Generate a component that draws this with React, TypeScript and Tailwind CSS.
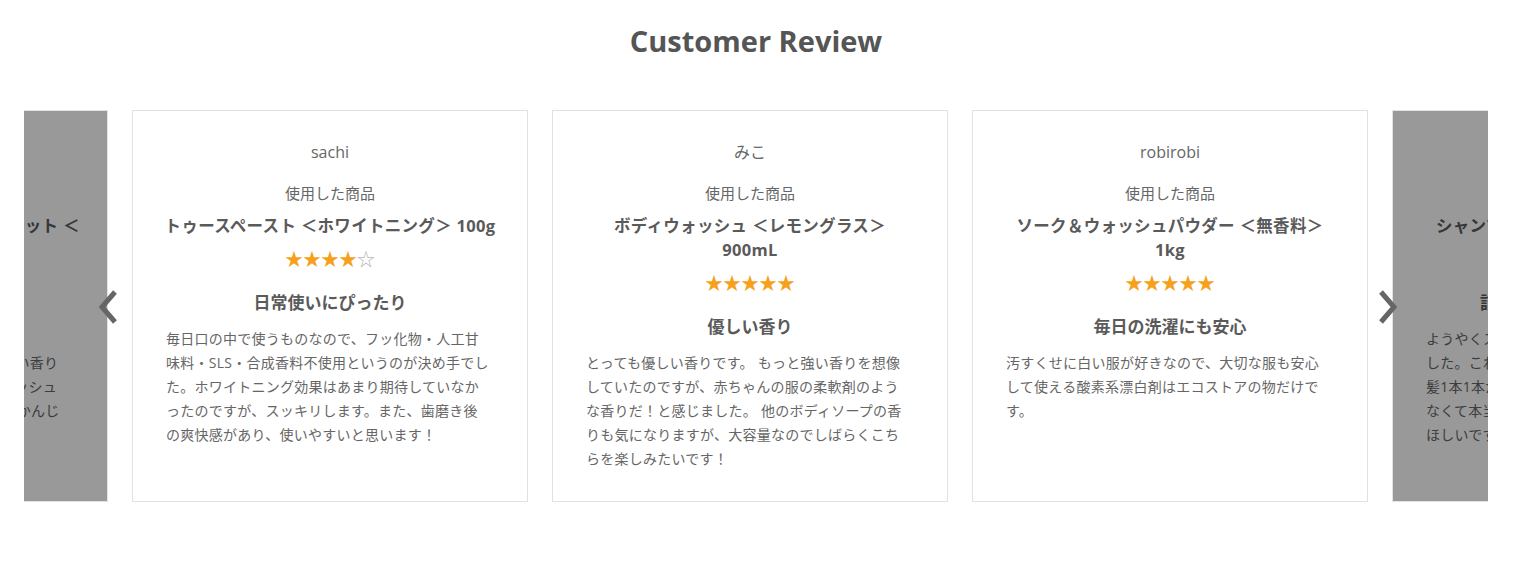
import React from "react";

type Review = {
    name: string;
    product: string[];
    rating: number;
    title: string;
    body: string;
    dimmed?: boolean;
};

const reviews: Review[] = [
    {
        name: "ゆうこ",
        product: ["ナチュラルハンドソープ詰め替え用セット ＜", "ローズ＞ 500mL"],
        rating: 5,
        title: "香りに癒やされます",
        body: "ローズの香りが上品で、ほんのり甘く優しい香りです。泡立ちも良くて、毎日のハンドウォッシュが楽しみになりました。使うたびに幸せなかんじです。",
        dimmed: true,
    },
    {
        name: "sachi",
        product: ["トゥースペースト ＜ホワイトニング＞ 100g"],
        rating: 4,
        title: "日常使いにぴったり",
        body: "毎日口の中で使うものなので、フッ化物・人工甘味料・SLS・合成香料不使用というのが決め手でした。ホワイトニング効果はあまり期待していなかったのですが、スッキリします。また、歯磨き後の爽快感があり、使いやすいと思います！",
    },
    {
        name: "みこ",
        product: ["ボディウォッシュ ＜レモングラス＞", "900mL"],
        rating: 5,
        title: "優しい香り",
        body: "とっても優しい香りです。 もっと強い香りを想像していたのですが、赤ちゃんの服の柔軟剤のような香りだ！と感じました。 他のボディソープの香りも気になりますが、大容量なのでしばらくこちらを楽しみたいです！",
    },
    {
        name: "robirobi",
        product: ["ソーク＆ウォッシュパウダー ＜無香料＞", "1kg"],
        rating: 5,
        title: "毎日の洗濯にも安心",
        body: "汚すくせに白い服が好きなので、大切な服も安心して使える酸素系漂白剤はエコストアの物だけです。",
    },
    {
        name: "まりりん",
        product: ["シャンプー ＜ダメージリペア＞ 1000mL"],
        rating: 5,
        title: "詰め替えもできて嬉しいです",
        body: "ようやくスカルプにも合うシャンプーに出会えました。これを使ってからは、くせが強かった私の髪1本1本がしっとりとまとまって、ひっかかりもなくて本当に満足しています。これからも作ってほしいです！",
        dimmed: true,
    },
];

function Stars({ rating }: { rating: number }) {
    return (
        <div className="text-[18px] leading-[24px] font-['Noto_Sans_CJK_JP',sans-serif]">
            {[1, 2, 3, 4, 5].map((i) =>
                i <= rating ? (
                    <span key={i} className="text-[#f5a11c]">★</span>
                ) : (
                    <span key={i} className="text-[#b5b5b5]">☆</span>
                )
            )}
        </div>
    );
}

function ReviewCard({ review }: { review: Review }) {
    return (
        <div className="relative h-[392px] w-[396px] shrink-0 border border-[#e2e2e2] bg-white pt-[29px] text-center">
            <p className="text-[16px] leading-[24px] text-[#666]">{review.name}</p>
            <p className="mt-[17px] text-[15px] leading-[24px] text-[#666]">使用した商品</p>
            <p className="mt-[9px] px-[20px] text-[16.5px] font-bold leading-[24px] tracking-[0.3px] text-[#5a5a5a]">
                {review.product.map((line) => (
                    <span key={line} className="block">
                        {line}
                    </span>
                ))}
            </p>
            <div className="mt-[8px]">
                <Stars rating={review.rating} />
            </div>
            <h3 className="mt-[20px] text-[17px] font-bold leading-[26px] text-[#5a5a5a]">{review.title}</h3>
            <p className="mt-[11px] ml-[33px] w-[324px] text-left text-[14px] leading-[24px] tracking-[0.25px] text-[#666]">
                {review.body}
            </p>
            {review.dimmed && <div className="absolute inset-0 bg-black/40" />}
        </div>
    );
}

function Arrow({ dir }: { dir: "left" | "right" }) {
    return (
        <svg width="22" height="36" viewBox="0 0 22 36" fill="none">
            <polyline
                points={dir === "left" ? "18,3 5,18 18,33" : "4,3 17,18 4,33"}
                stroke="#666"
                strokeWidth="5"
                strokeLinejoin="miter"
            />
        </svg>
    );
}

export default function App() {
    return (
        <div className="h-[562px] w-[1524px] bg-white font-['Open_Sans','Noto_Sans_CJK_JP',sans-serif]">
            <div className="ml-[24px] w-[1464px]">
                <h2 className="pt-[22px] text-center text-[29px] font-bold leading-[38px] text-[#555]">
                    Customer Review
                </h2>
                <div className="relative mt-[50px] overflow-hidden">
                    <div className="-ml-[312px] flex gap-[24px]">
                        {reviews.map((r) => (
                            <ReviewCard key={r.name} review={r} />
                        ))}
                    </div>
                    <button className="absolute left-[73px] top-[179px]">
                        <Arrow dir="left" />
                    </button>
                    <button className="absolute left-[1353px] top-[179px]">
                        <Arrow dir="right" />
                    </button>
                </div>
            </div>
        </div>
    );
}
